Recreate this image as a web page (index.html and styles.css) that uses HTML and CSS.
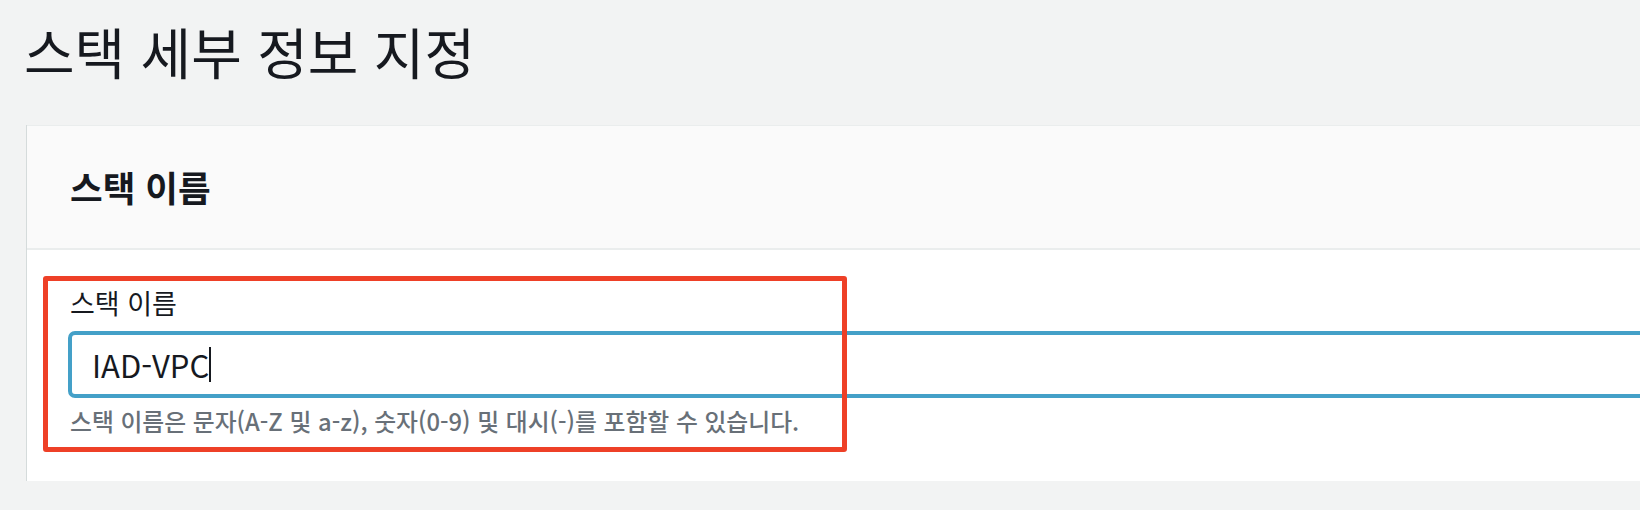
FILE: index.html
```html
<!DOCTYPE html>
<html lang="ko">
<head>
<meta charset="utf-8">
<link rel="stylesheet" href="styles.css">
</head>
<body>
<div class="page">
  <h1 class="title">스택 세부 정보 지정</h1>
  <section class="card">
    <header class="card-header">
      <h2 class="card-title">스택 이름</h2>
    </header>
    <div class="card-body">
      <div class="field">
        <label class="field-label">스택 이름</label>
        <div class="input">
          <span class="input-text">IAD-VPC</span><span class="caret"></span>
        </div>
        <p class="hint">스택 이름은 문자(A-Z 및 a-z), 숫자(0-9) 및 대시(-)를 포함할 수 있습니다.</p>
      </div>
      <div class="highlight"></div>
    </div>
  </section>
</div>
</body>
</html>
```
FILE: styles.css
```css
html, body {
  margin: 0;
  padding: 0;
  background: #f2f3f3;
  overflow: hidden;
}
body {
  font-family: "Noto Sans CJK KR", "Noto Sans", sans-serif;
  color: #16191f;
}
.page {
  padding: 15px 0 0 24px;
}
.title {
  margin: 0;
  font-size: 55px;
  font-weight: 400;
  line-height: 70px;
  height: 110px;
}
.card {
  margin-left: 3px;
  width: 1700px;
  background: #fff;
  box-shadow: -1px 0 0 #d5dbdb, 0 2px 0 #aab7b8;
  border-top: 1px solid #eaeded;
}
.card-header {
  background: #fafafa;
  border-bottom: 2px solid #eaeded;
  height: 122px;
  display: flex;
  align-items: center;
  padding-left: 43px;
}
.card-title {
  margin: 0;
  font-size: 35.5px;
  font-weight: 700;
  line-height: 44px;
}
.card-body {
  position: relative;
  padding: 35px 0 0 41px;
  height: 196px;
}
.field-label {
  display: block;
  font-size: 27px;
  line-height: 36px;
  color: #16191f;
  padding-left: 2px;
}
.input {
  margin-top: 10px;
  height: 59px;
  border: 4px solid #44a0c8;
  border-radius: 7px;
  display: flex;
  align-items: center;
  padding-left: 20px;
  background: #fff;
}
.input-text {
  font-size: 31px;
  color: #16191f;
}
.caret {
  width: 2px;
  height: 35px;
  background: #16191f;
}
.hint {
  margin: 8px 0 0 2px;
  font-size: 23.8px;
  font-weight: 500;
  line-height: 30px;
  color: #687078;
}
.highlight {
  position: absolute;
  left: 16px;
  top: 26px;
  width: 794px;
  height: 166px;
  border: 5px solid #ee4027;
  border-radius: 3px;
}
```
